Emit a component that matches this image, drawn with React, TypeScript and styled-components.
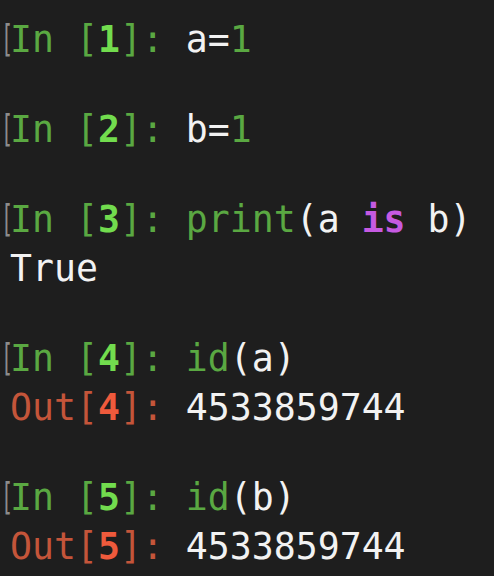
import React from "react";
import styled, { createGlobalStyle } from "styled-components";

const Global = createGlobalStyle`
  html, body { margin: 0; padding: 0; background: #1e1e1e; }
  #root { min-height: 576px; }
`;

const Terminal = styled.div`
  box-sizing: border-box;
  width: 494px;
  height: 576px;
  overflow: hidden;
  background: #1e1e1e;
  padding: 15px 0 0 10px;
  font-family: "DejaVu Sans Mono", "Liberation Mono", monospace;
  font-size: 36.5px;
  color: #f2f2f2;
  display: flex;
  flex-direction: column;
  gap: 41px;
`;

const Cell = styled.div`
  display: flex;
  flex-direction: column;
`;

const Line = styled.div`
  position: relative;
  height: 49px;
  line-height: 49px;
  white-space: pre;
`;

const Mark = styled.span`
  position: absolute;
  left: -9px;
  top: 0;
  color: #8c8c8c;
  font-weight: 300;
  transform: scaleX(0.55);
  transform-origin: left center;
`;

const Prompt = styled.span<{ $out?: boolean }>`
  color: ${(p) => (p.$out ? "#c4553a" : "#5aa842")};
`;

const Num = styled.span<{ $out?: boolean }>`
  color: ${(p) => (p.$out ? "#ef5a3c" : "#72dc4e")};
  font-weight: bold;
`;

const Green = styled.span`
  color: #5aa842;
`;

const Keyword = styled.span`
  color: #c65ae2;
  font-weight: bold;
`;

const InPrompt = ({ n }: { n: number }) => (
  <>
    <Mark>[</Mark>
    <Prompt>In [</Prompt>
    <Num>{n}</Num>
    <Prompt>]: </Prompt>
  </>
);

const OutPrompt = ({ n }: { n: number }) => (
  <>
    <Prompt $out>Out[</Prompt>
    <Num $out>{n}</Num>
    <Prompt $out>]: </Prompt>
  </>
);

export default function App() {
  return (
    <>
      <Global />
      <Terminal>
        <Cell>
          <Line>
            <InPrompt n={1} />a=<Green>1</Green>
          </Line>
        </Cell>
        <Cell>
          <Line>
            <InPrompt n={2} />b=<Green>1</Green>
          </Line>
        </Cell>
        <Cell>
          <Line>
            <InPrompt n={3} />
            <Green>print</Green>(a <Keyword>is</Keyword> b)
          </Line>
          <Line>True</Line>
        </Cell>
        <Cell>
          <Line>
            <InPrompt n={4} />
            <Green>id</Green>(a)
          </Line>
          <Line>
            <OutPrompt n={4} />4533859744
          </Line>
        </Cell>
        <Cell>
          <Line>
            <InPrompt n={5} />
            <Green>id</Green>(b)
          </Line>
          <Line>
            <OutPrompt n={5} />4533859744
          </Line>
        </Cell>
      </Terminal>
    </>
  );
}
